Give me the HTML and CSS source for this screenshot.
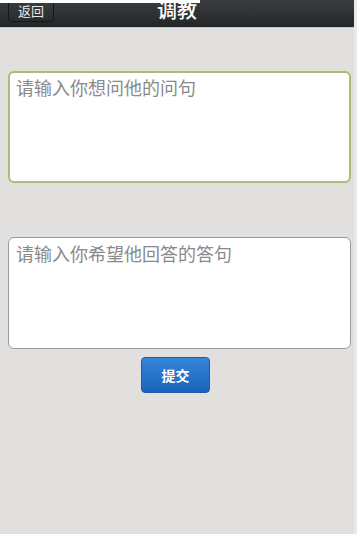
FILE: index.html
```html
<!DOCTYPE html>
<html lang="zh-CN">
<head>
    <meta charset="UTF-8">
    <meta name="viewport" content="width=device-width, initial-scale=1.0">
    <title>调教</title>
    <link rel="stylesheet" href="styles.css">
</head>
<body>
    <div class="page">
        <div class="header">
            <div class="top-strip"></div>
            <button class="back-btn">返回</button>
            <h1 class="title">调教</h1>
        </div>
        <div class="content">
            <textarea class="field field-active" placeholder="请输入你想问他的问句"></textarea>
            <textarea class="field field-answer" placeholder="请输入你希望他回答的答句"></textarea>
            <div class="actions">
                <button class="submit-btn">提交</button>
            </div>
        </div>
    </div>
</body>
</html>
```

FILE: styles.css
```css
html, body {
    margin: 0;
    padding: 0;
    height: 100%;
}

body {
    font-family: "Noto Sans CJK SC", "Liberation Sans", sans-serif;
    background-color: #e1e0de;
}

.page {
    height: 100%;
    border-right: 3px solid #ebeae8;
    box-sizing: border-box;
}

.header {
    position: relative;
    height: 27px;
    background: linear-gradient(#3a3e41, #232628);
    border-bottom: 1px solid #c9c8c6;
    display: flex;
    align-items: flex-start;
    justify-content: center;
    overflow: hidden;
}

.top-strip {
    position: absolute;
    left: 0;
    top: 0;
    width: 200px;
    height: 3px;
    background-color: #fff;
    z-index: 2;
}

.back-btn {
    position: absolute;
    left: 8px;
    top: -3px;
    width: 46px;
    height: 25px;
    padding: 2px 0 0 0;
    border: 1px solid #151718;
    border-radius: 4px;
    background: linear-gradient(#3b3f42, #2a2d30);
    color: #e8e8e8;
    font-family: inherit;
    font-size: 13px;
    line-height: 18px;
}

.title {
    margin: -4px 0 0 0;
    font-size: 20px;
    font-weight: 500;
    color: #fff;
    line-height: 28px;
}

.content {
    padding: 43px 3px 0 8px;
    display: flex;
    flex-direction: column;
}

.field {
    display: block;
    height: 112px;
    box-sizing: border-box;
    margin: 0;
    padding: 2px 6px;
    border-radius: 6px;
    background-color: #fff;
    font-family: inherit;
    font-size: 18px;
    line-height: 24px;
    color: #333;
    resize: none;
    outline: none;
}

.field::placeholder {
    color: #8a8a8a;
}

.field-active {
    border: 2px solid #a9bd78;
    box-shadow: 0 0 2px #d4e3a8;
}

.field-answer {
    margin-top: 54px;
    border: 1px solid #9a9a9a;
    padding: 3px 7px;
}

.actions {
    display: flex;
    justify-content: center;
    margin-top: 8px;
    padding-right: 8px;
}

.submit-btn {
    width: 69px;
    height: 36px;
    border: 1px solid #1b5aa8;
    border-radius: 4px;
    background: linear-gradient(#3486dc, #1c62bb);
    color: #fff;
    font-family: inherit;
    font-size: 14px;
    font-weight: bold;
}
```
